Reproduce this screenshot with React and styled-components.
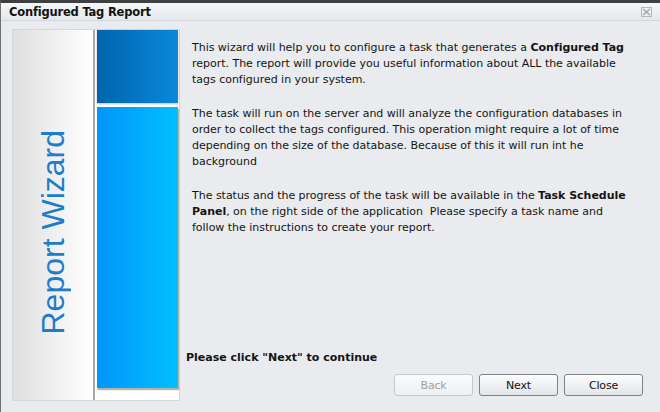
import React from "react";
import styled, { createGlobalStyle } from "styled-components";

const GlobalStyle = createGlobalStyle`
    html, body {
        margin: 0;
        padding: 0;
        background: #3c3c3c;
    }
    * {
        box-sizing: border-box;
    }
`;

const CloseGlyph = () => (
    <svg width="11" height="10" viewBox="0 0 11 10">
        <rect x="0.5" y="0.5" width="10" height="9" fill="none" stroke="#b4b8bc" />
        <path d="M2 2 L9 8 M9 2 L2 8" stroke="#a0a4a8" strokeWidth="1.4" />
    </svg>
);

const App = () => {
    return (
        <Window>
            <GlobalStyle />
            <TitleBar>
                <Title>Configured Tag Report</Title>
                <CloseButton>
                    <CloseGlyph />
                </CloseButton>
            </TitleBar>
            <Body>
                <SidePanel>
                    <LabelStrip>
                        <VerticalLabel>Report Wizard</VerticalLabel>
                    </LabelStrip>
                    <Divider />
                    <BlockColumn>
                        <Block variant="dark" />
                        <Block variant="light" />
                    </BlockColumn>
                </SidePanel>
                <Main>
                    <Paragraph>
                        This wizard will help you to configure a task that generates a <b>Configured Tag</b><br />
                        report. The report will provide you useful information about ALL the available<br />
                        tags configured in your system.
                    </Paragraph>
                    <Paragraph>
                        The task will run on the server and will analyze the configuration databases in<br />
                        order to collect the tags configured. This operation might require a lot of time<br />
                        depending on the size of the database. Because of this it will run int he<br />
                        background
                    </Paragraph>
                    <Paragraph>
                        The status and the progress of the task will be available in the <b>Task Schedule</b><br />
                        <b>Panel</b>, on the right side of the application&nbsp; Please specify a task name and<br />
                        follow the instructions to create your report.
                    </Paragraph>
                    <Hint>Please click "Next" to continue</Hint>
                    <Footer>
                        <Button disabled>Back</Button>
                        <Button>Next</Button>
                        <Button>Close</Button>
                    </Footer>
                </Main>
            </Body>
        </Window>
    );
};

export default App;

const Window = styled.div`
    width: 660px;
    height: 412px;
    background: #e9ebee;
    border-top: 3px solid #3f4042;
    border-left: 1px solid #6e7073;
    display: flex;
    flex-direction: column;
    overflow: hidden;
    font-family: "DejaVu Sans", Verdana, sans-serif;
`;

const TitleBar = styled.div`
    height: 18px;
    display: flex;
    align-items: center;
    justify-content: space-between;
    padding: 0 8px 0 8px;
    background: linear-gradient(#f5f7f9, #e4e8ec);
    border-bottom: 1px solid #d2d6da;
`;

const Title = styled.div`
    font-size: 11.5px;
    font-weight: 700;
    color: #111;
    letter-spacing: -0.2px;
`;

const CloseButton = styled.div`
    display: flex;
    align-items: center;
`;

const Body = styled.div`
    flex: 1;
    display: flex;
    padding: 8px 12px 11px 11px;
`;

const SidePanel = styled.div`
    width: 168px;
    display: flex;
    border: 1px solid #d4d6d8;
    background: #fff;
`;

const LabelStrip = styled.div`
    width: 80px;
    display: flex;
    align-items: center;
    justify-content: center;
    background: linear-gradient(to right, #dfdfdf, #ffffff);
`;

const VerticalLabel = styled.div`
    writing-mode: vertical-rl;
    transform: rotate(180deg);
    font-family: "Liberation Sans", Arial, sans-serif;
    font-size: 32px;
    color: #1d7dc8;
    white-space: nowrap;
    margin-top: 34px;
`;

const Divider = styled.div`
    width: 2px;
    background: #a8a8a8;
`;

const BlockColumn = styled.div`
    flex: 1;
    display: flex;
    flex-direction: column;
    gap: 4px;
    padding: 0 0 10px 2px;
`;

const Block = styled.div`
    height: ${p => (p.variant === "dark" ? "73px" : "281px")};
    background: ${p =>
        p.variant === "dark"
            ? "linear-gradient(to right, #0064ad, #0a88dc)"
            : "linear-gradient(to right, #0096fb, #00c0fd)"};
    box-shadow: ${p => (p.variant === "dark" ? "0 1px 2px rgba(0,0,0,0.25)" : "1px 2px 1px rgba(0,0,0,0.3)")};
    margin-right: 1px;
`;

const Main = styled.div`
    flex: 1;
    display: flex;
    flex-direction: column;
    padding: 11px 0 0 6px;
    font-size: 11px;
    color: #141414;
`;

const Paragraph = styled.p`
    margin: 0 0 18px 6px;
    line-height: 16px;
    letter-spacing: -0.02px;
    white-space: nowrap;

    b {
        font-weight: 700;
    }
`;

const Hint = styled.div`
    margin-top: auto;
    font-weight: 700;
    font-size: 11px;
    letter-spacing: 0;
    line-height: 16px;
    margin-bottom: 8px;
`;

const Footer = styled.div`
    display: flex;
    justify-content: flex-end;
    gap: 6px;
    padding-right: 5px;
    margin-bottom: 5px;
`;

const Button = styled.button`
    width: 79px;
    height: 22px;
    border-radius: 3px;
    border: 1px solid ${p => (p.disabled ? "#c4c8cc" : "#7c8288")};
    background: ${p => (p.disabled ? "linear-gradient(#fbfbfc, #eef0f2)" : "linear-gradient(#fdfdfd, #e2e5e8)")};
    color: ${p => (p.disabled ? "#a0a0a0" : "#111")};
    font-family: "DejaVu Sans", Verdana, sans-serif;
    font-size: 11px;
    letter-spacing: -0.2px;
    padding: 0;
`;
